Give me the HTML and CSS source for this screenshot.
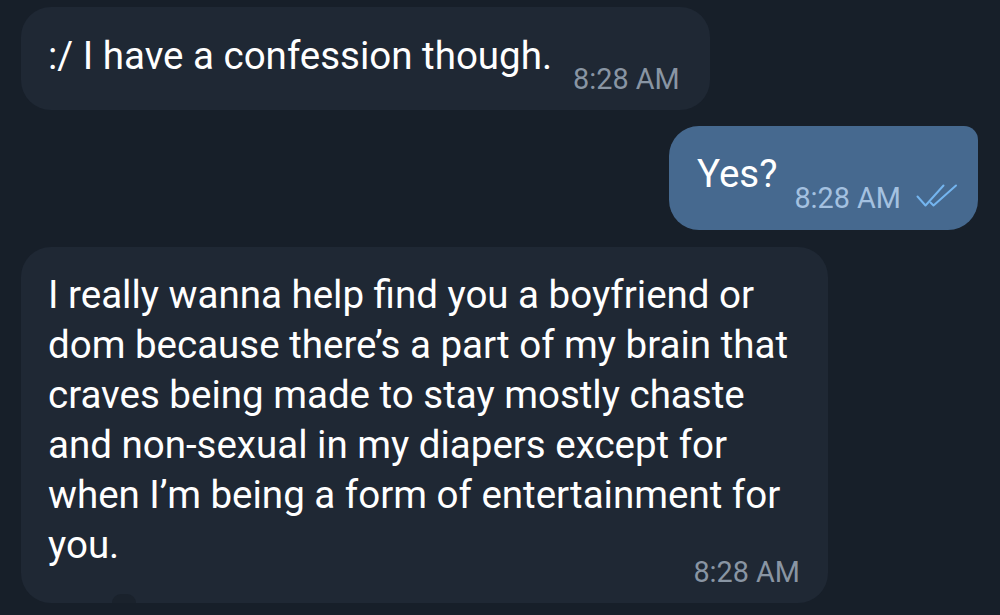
FILE: index.html
```html
<!DOCTYPE html>
<html lang="en">
<head>
  <meta charset="UTF-8">
  <meta name="viewport" content="width=device-width, initial-scale=1.0">
  <title>Chat</title>
  <link rel="stylesheet" href="styles.css">
</head>
<body>
  <div class="chat">
    <div class="row">
      <div class="bubble in short">
        <span class="text">:/ I have a confession though.</span>
        <span class="time">8:28 AM</span>
      </div>
    </div>

    <div class="row right">
      <div class="bubble out short">
        <span class="text">Yes?</span>
        <span class="time">8:28 AM</span>
        <svg class="ticks" width="42" height="24" viewBox="0 0 42 24">
          <path d="M1.5 12.5 L9.5 21.5 L27.5 1.5" fill="none" stroke="#74b5ef" stroke-width="2" stroke-linecap="round" stroke-linejoin="round"/>
          <path d="M14.5 18.5 L17.5 21.5 L40 1.5" fill="none" stroke="#74b5ef" stroke-width="2" stroke-linecap="round" stroke-linejoin="round"/>
        </svg>
      </div>
    </div>

    <div class="row">
      <div class="bubble in long">
        <p class="text">I really wanna help find you a boyfriend or<br>dom because there’s a part of my brain that<br>craves being made to stay mostly chaste<br>and non-sexual in my diapers except for<br>when I’m being a form of entertainment for<br>you.</p>
        <div class="time">8:28 AM</div>
        <span class="peek"></span>
      </div>
    </div>
  </div>
</body>
</html>
```

FILE: styles.css
```css
body {
  margin: 0;
  background: #171f29;
  font-family: Roboto, "Noto Sans", sans-serif;
  color: #ffffff;
  height: 615px;
  overflow: hidden;
}

.chat {
  padding: 7px 22px 0 21px;
}

.row {
  display: flex;
}

.row.right {
  justify-content: flex-end;
  margin-top: 16px;
}

.row + .row:last-child {
  margin-top: 17px;
}

.bubble {
  border-radius: 30px;
  box-sizing: border-box;
  position: relative;
}

.bubble.in {
  background-color: #1f2834;
}

.bubble.out {
  background-color: #46698f;
  border-top-right-radius: 14px;
}

.short {
  display: flex;
  align-items: flex-start;
}

.text {
  font-size: 38.5px;
  line-height: 50px;
  margin: 0;
}

.time {
  font-size: 28.8px;
  line-height: 34px;
  color: #8995a3;
  white-space: nowrap;
}

.in.short {
  padding: 24px 30px 13.85px 27px;
}

.in.short .time {
  margin-top: 31.15px;
  margin-left: 21px;
}

.out.short {
  padding: 23px 20px 14.85px 28px;
}

.out .time {
  color: #a4c1e0;
  margin-top: 32.15px;
  margin-left: 17px;
}

.ticks {
  margin-top: 35px;
  margin-left: 15px;
}

.long {
  width: 807px;
  padding: 23px 28px 13.85px 27px;
}

.long .time {
  text-align: right;
  margin-top: -14.85px;
}

.peek {
  position: absolute;
  left: 91px;
  bottom: 0;
  width: 24px;
  height: 9px;
  border-radius: 12px 12px 0 0;
  background-color: #1a222c;
}
```
